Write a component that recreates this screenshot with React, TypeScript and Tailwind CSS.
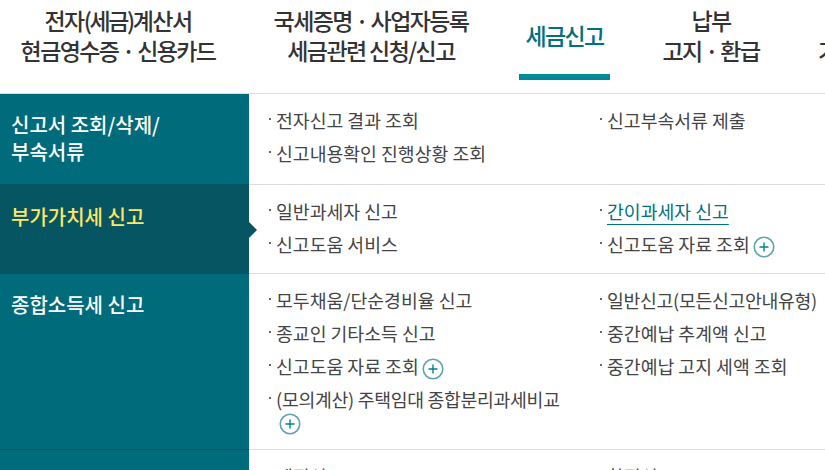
import type { ReactNode } from 'react';

const font = "font-['Noto_Sans_CJK_KR','Noto_Sans',sans-serif]";

function Plus() {
  return (
    <svg className="inline-block w-[22px] h-[22px] align-[-6px]" viewBox="0 0 22 22" fill="none">
      <circle cx="11" cy="11" r="9.75" stroke="#5fa3ae" strokeWidth="1.6" />
      <path d="M6.5 11h9M11 6.5v9" stroke="#00838f" strokeWidth="1.4" />
    </svg>
  );
}

type Item = { label: string; plus?: boolean; link?: boolean; wrapPlus?: boolean; tight?: boolean };

function Link({ item }: { item: Item }) {
  return (
    <li className={`flex text-[18.3px] leading-[33px] text-[#444] ${item.tight ? 'tracking-[-0.3px]' : ''}`}>
      <span className="w-[2px] h-[2px] shrink-0 mt-[14px] mr-[5px] bg-[#666]" />
      <span className={item.wrapPlus ? 'flex flex-col items-start' : ''}>
        <span className={item.link ? 'text-[#00717f] underline underline-offset-[5px] decoration-1' : ''}>
          {item.label}
        </span>
        {item.plus && <span className={item.wrapPlus ? 'ml-[3px] -mt-[3px] h-[22px] flex' : 'ml-[3px]'}><Plus /></span>}
      </span>
    </li>
  );
}

function Row({ title, left, right, h, active, py = 'pt-[10px]' }: { title: string[]; left: Item[]; right: Item[]; h: string; active?: boolean; py?: string }) {
  return (
    <div className={`flex ${h}`}>
      <div className={`relative w-[249px] shrink-0 pl-[11px] text-[20px] leading-[27px] font-medium border-b border-[#055562] ${active ? 'bg-[#055562] text-[#ffe766] pt-[18px]' : 'bg-[#006b7a] text-white pt-[17px]'}`}>
        {title.map(t => <div key={t}>{t}</div>)}
        {active && <span className="absolute left-[249px] top-[37px] border-y-[8px] border-l-[8px] border-y-transparent border-l-[#055562]" />}
      </div>
      <div className={`flex-1 flex pl-[20px] border-b border-[#dcdcdc] ${py}`}>
        <ul className="w-[331px] shrink-0">{left.map(i => <Link key={i.label} item={i} />)}</ul>
        <ul className="flex-1 whitespace-nowrap">{right.map(i => <Link key={i.label} item={i} />)}</ul>
      </div>
    </div>
  );
}

function Tab({ lines, w, active }: { lines: ReactNode[]; w: string; active?: boolean }) {
  return (
    <div className={`relative ${w} shrink-0 h-full flex flex-col items-center text-[23px] leading-[30px] font-medium tracking-[-1.6px] ${active ? 'text-[#00717f] pt-[20px]' : 'text-[#333] pt-[5px]'}`}>
      {lines.map((l, i) => <div key={i}>{l}</div>)}
      {active && <span className="absolute left-0 right-0 top-[74px] h-[6px] bg-[#008996]" />}
    </div>
  );
}

export default function App() {
  return (
    <div className={`w-[825px] h-[470px] overflow-hidden bg-white ${font}`}>
      <div className="flex h-[94px] border-b border-[#dcdcdc] whitespace-nowrap">
        <Tab w="w-[236px]" lines={[<>전자<span className="tracking-[-2.4px]">(세금)</span>계산서</>, '현금영수증 · 신용카드']} />
        <Tab w="w-[270px] mr-[13px]" lines={['국세증명 · 사업자등록', '세금관련 신청/신고']} />
        <Tab w="w-[91px]" active lines={['세금신고']} />
        <Tab w="w-[202px]" lines={['납부', '고지 · 환급']} />
        <div className="pl-[6px] text-[23px] leading-[30px] font-medium text-[#333] pt-[35px]">기</div>
      </div>
      <Row h="h-[91px]" title={['신고서 조회/삭제/', '부속서류']}
        left={[{ label: '전자신고 결과 조회' }, { label: '신고내용확인 진행상황 조회' }]}
        right={[{ label: '신고부속서류 제출' }]} />
      <Row h="h-[89px]" active title={['부가가치세 신고']}
        left={[{ label: '일반과세자 신고' }, { label: '신고도움 서비스' }]}
        right={[{ label: '간이과세자 신고', link: true }, { label: '신고도움 자료 조회', plus: true }]} />
      <Row h="h-[176px]" title={['종합소득세 신고']}
        left={[{ label: '모두채움/단순경비율 신고' }, { label: '종교인 기타소득 신고' }, { label: '신고도움 자료 조회', plus: true }, { label: '(모의계산) 주택임대 종합분리과세비교', plus: true, wrapPlus: true, tight: true }]}
        right={[{ label: '일반신고(모든신고안내유형)', tight: true }, { label: '중간예납 추계액 신고' }, { label: '중간예납 고지 세액 조회' }]} />
      <Row h="h-[60px]" py="pt-[10px]" title={['양도소득세 신고']}
        left={[{ label: '예정신고' }]}
        right={[{ label: '확정신고' }]} />
    </div>
  );
}
